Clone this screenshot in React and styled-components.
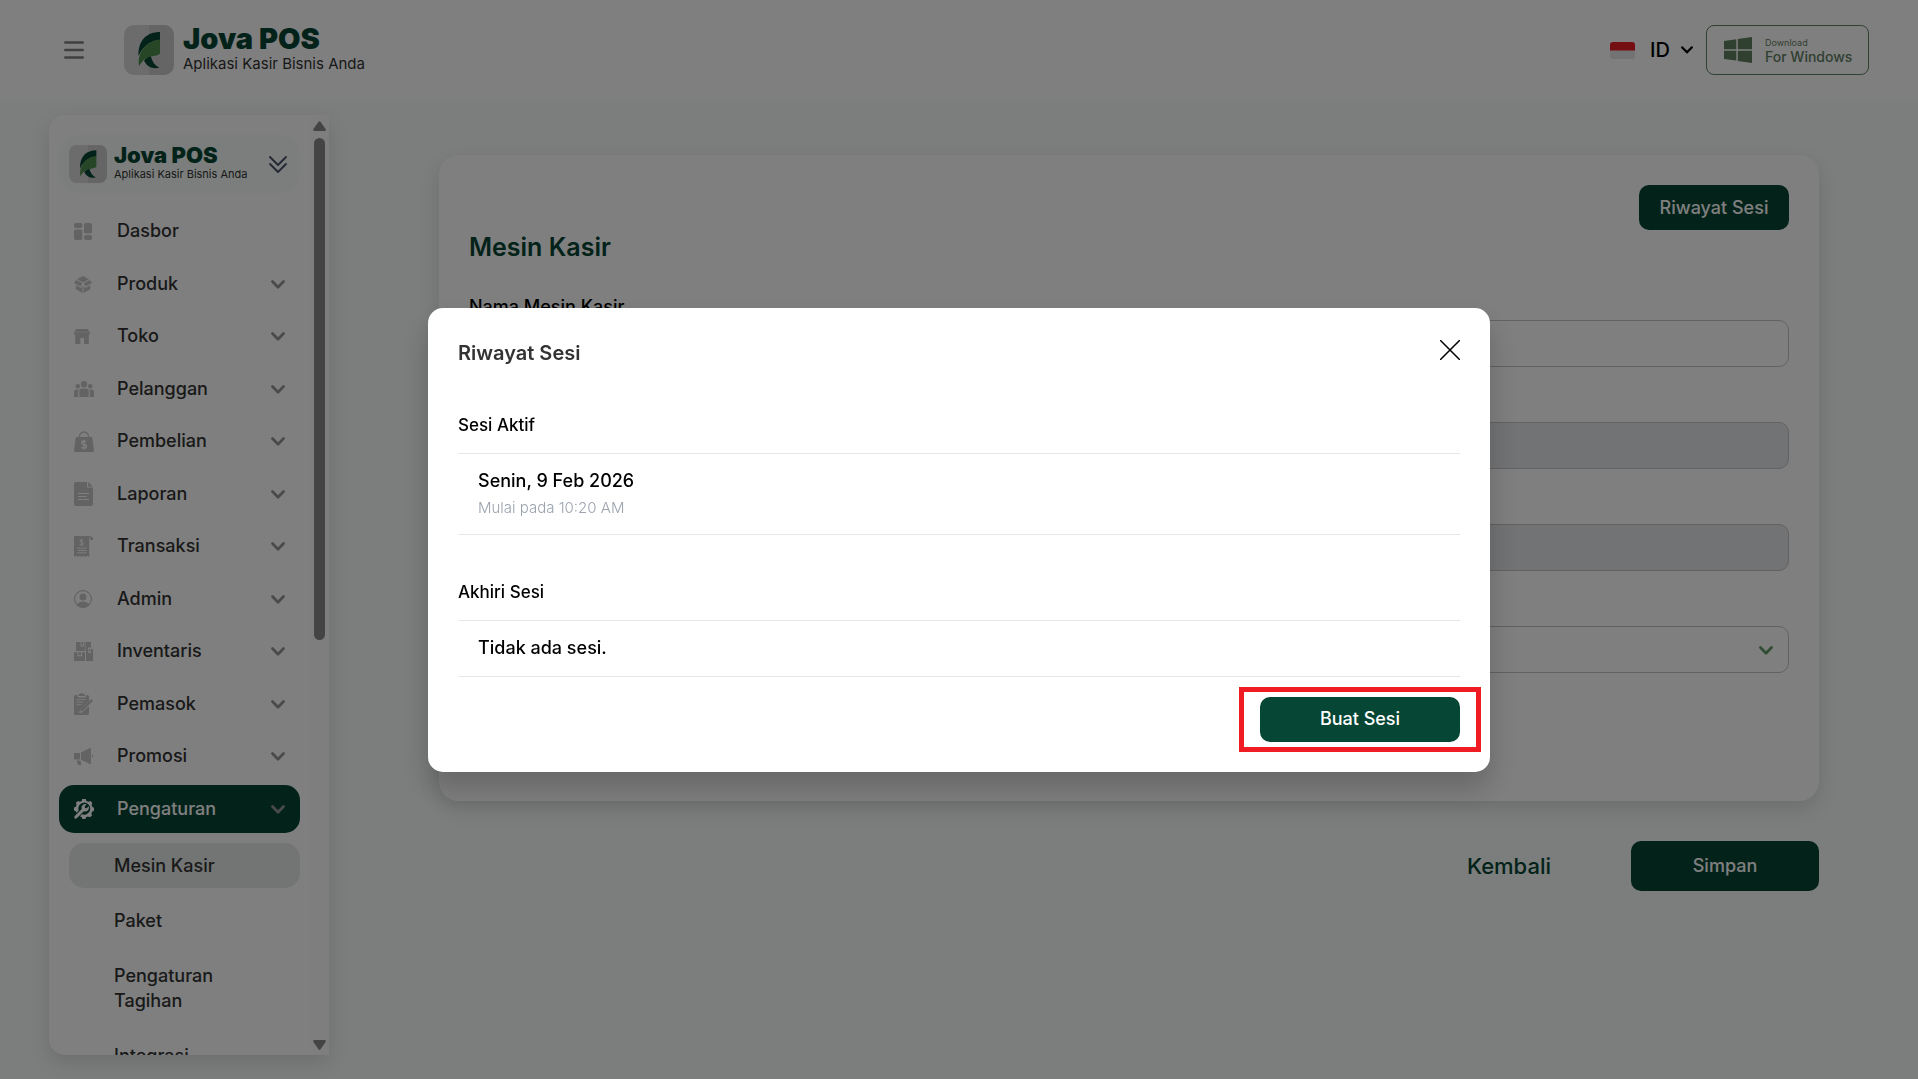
import React from "react";
import styled, { createGlobalStyle, css } from "styled-components";

const GlobalStyle = createGlobalStyle`
  *, *::before, *::after {
    box-sizing: border-box;
  }
  html, body {
    margin: 0;
    padding: 0;
  }
  body {
    background: #f6fcf9;
    color: #333;
    font-family: "Inter", "Open Sans", sans-serif;
    font-size: 18px;
    font-weight: 500;
    line-height: 24px;
    overflow: hidden;
  }
  button, input, select {
    font: inherit;
    color: inherit;
  }
  button {
    border: 0;
    padding: 0;
    background: none;
    cursor: pointer;
  }
  a {
    color: inherit;
    text-decoration: none;
  }
  ul {
    list-style: none;
    margin: 0;
    padding: 0;
  }
  svg {
    display: block;
    flex: none;
  }
`;

const Page = styled.div`
  display: flex;
  flex-direction: column;
  min-height: 100vh;
`;

/* Header */

const Header = styled.header`
  display: flex;
  align-items: center;
  height: 100px;
  padding: 0 49px 0 64px;
  background: #fff;
`;

const MenuToggle = styled.button`
  display: flex;
  margin-right: 40px;
`;

const Brand = styled.a`
  display: flex;
  align-items: center;
  gap: ${(p) => (p.$small ? 7 : 9)}px;
`;

const BrandName = styled.strong`
  display: block;
  color: #064635;
  font-size: ${(p) => (p.$small ? 22 : 29)}px;
  font-weight: 900;
  line-height: ${(p) => (p.$small ? 20 : 28)}px;
`;

const BrandTagline = styled.span`
  display: block;
  font-size: ${(p) => (p.$small ? 11 : 15)}px;
  font-weight: 400;
  line-height: ${(p) => (p.$small ? 18 : 22)}px;
  white-space: nowrap;
`;

const HeaderTools = styled.div`
  display: flex;
  align-items: center;
  margin-left: auto;
`;

const LanguageButton = styled.button`
  display: flex;
  align-items: center;
  margin-right: 13px;
  color: #000;
  font-size: 20px;
`;

const LanguageCode = styled.span`
  margin: 0 11px 0 15px;
`;

const DownloadLink = styled.a`
  display: flex;
  align-items: center;
  gap: 13px;
  width: 163px;
  height: 50px;
  padding-left: 17px;
  border: 1px solid #5f8566;
  border-radius: 8px;
  color: #5f8063;
  font-size: 14px;
  line-height: 14px;
  white-space: nowrap;

  small {
    display: block;
    font-size: 9px;
    font-weight: 400;
  }
`;

/* Sidebar */

const Body = styled.div`
  display: flex;
  flex: 1;
`;

const Sidebar = styled.aside`
  display: flex;
  flex: none;
  width: 280px;
  height: calc(100vh - 139px);
  margin: 15px 0 0 49px;
  overflow: hidden;
  border-radius: 16px 0 0 16px;
  background: #fff;
  box-shadow: 0 8px 20px rgba(0, 0, 0, 0.12);
`;

const SidebarContent = styled.div`
  flex: 1;
  padding: 20px 10px 0;
`;

const BrandCard = styled.div`
  display: flex;
  align-items: center;
  justify-content: space-between;
  height: 58px;
  margin-bottom: 14px;
  padding: 0 13px 0 10px;
  border-radius: 20px;
  background: #f6fcf9;
`;

const MenuItem = styled.li`
  margin-bottom: 4px;

  &:nth-child(odd) {
    margin-bottom: 5px;
  }
`;

const MenuButton = styled.button`
  display: flex;
  align-items: center;
  width: 100%;
  height: 48px;
  padding: 0 15px;
  border-radius: 15px;
  color: #333;
  text-align: left;

  ${(p) =>
    p.$active &&
    css`
      background: #064635;
      color: #fff;
    `}
`;

const MenuIcon = styled.span`
  display: flex;
  align-items: center;
  width: 43px;
  color: ${(p) => (p.$active ? "#fff" : "#c6c6c6")};
`;

const MenuLabel = styled.span`
  flex: 1;
`;

const SubMenu = styled.ul`
  display: flex;
  flex-direction: column;
  gap: 10px;
  padding: 10px 0 0 10px;
`;

const SubLink = styled.a`
  display: block;
  padding: 10px 60px 10px 45px;
  border-radius: 15px;
  background: ${(p) => (p.$active ? "#e5ebe8" : "transparent")};
  line-height: 25px;
`;

const ScrollTrack = styled.div`
  display: flex;
  flex-direction: column;
  align-items: center;
  width: 19px;
  padding: 6px 0 5px;
  background: #fdfdfd;
`;

const ScrollThumb = styled.div`
  width: 11px;
  height: 54%;
  margin: 7px 0 auto;
  border-radius: 6px;
  background: #888;
`;

/* Main form */

const Main = styled.main`
  flex: 1;
  padding: 55px 99px 0 110px;
`;

const Card = styled.section`
  display: flex;
  flex-direction: column;
  padding: 30px 30px 128px;
  border-radius: 20px;
  background: #fff;
  box-shadow: 0 8px 20px rgba(0, 0, 0, 0.12);
`;

const PrimaryButton = styled.button`
  width: ${(p) => p.$width || 150}px;
  height: ${(p) => (p.$tall ? 50 : 45)}px;
  border-radius: 10px;
  background: #064635;
  color: #fff;
`;

const CardTools = styled.div`
  display: flex;
  justify-content: flex-end;
`;

const CardTitle = styled.h1`
  margin: 0 0 30px;
  color: #064635;
  font-size: 25px;
  font-weight: 600;
  line-height: 34px;
`;

const Field = styled.div`
  position: relative;
  display: flex;
  flex-direction: column;

  & + & {
    margin-top: 29px;
  }

  label {
    color: #000;
    line-height: 26px;
  }
`;

const control = css`
  width: 100%;
  height: 47px;
  padding: 0 16px;
  border: 1px solid #c4c4c4;
  border-radius: 10px;
  background: #fff;

  &:disabled {
    background: #e5e7eb;
  }
`;

const Input = styled.input`
  ${control}
`;

const Select = styled.select`
  ${control}
  appearance: none;
`;

const SelectArrow = styled.span`
  position: absolute;
  right: 16px;
  bottom: 18px;
  color: #5f9c66;
  pointer-events: none;
`;

const Actions = styled.div`
  display: flex;
  align-items: center;
  justify-content: flex-end;
  gap: 80px;
  margin-top: 40px;
`;

const BackLink = styled.a`
  color: #064635;
  font-size: 22px;
`;

/* Session dialog */

const Overlay = styled.div`
  position: fixed;
  inset: 0;
  display: flex;
  align-items: center;
  justify-content: center;
  background: rgba(0, 0, 0, 0.5);
`;

const Dialog = styled.div`
  width: 100%;
  max-width: 1062px;
  padding: 30px;
  border-radius: 15px;
  background: #fff;
  box-shadow: 0 16px 30px rgba(0, 0, 0, 0.2);
  color: #000;
`;

const DialogHeader = styled.div`
  display: flex;
  align-items: flex-start;
  justify-content: space-between;
  margin-bottom: 45px;
`;

const DialogTitle = styled.h2`
  margin: 0;
  color: #333;
  font-size: 20px;
  font-weight: 600;
  line-height: 30px;
`;

const CloseButton = styled.button`
  display: flex;
  padding: 2px 0;
`;

const SessionGroup = styled.section`
  & + & {
    margin-top: 45px;
  }

  h3 {
    margin: 0;
    padding-bottom: 16px;
    border-bottom: 1px solid #e5e7eb;
    font-size: 17px;
    font-weight: 500;
  }
`;

const SessionRow = styled.div`
  padding: 15px 20px 16px;
  border-bottom: 1px solid #e5e7eb;

  p {
    margin: 0;
  }
`;

const SessionTime = styled.p`
  padding-top: 5px;
  color: #9ca3af;
  font-size: 15px;
  font-weight: 300;
  line-height: 20px;
`;

const DialogFooter = styled.div`
  display: flex;
  justify-content: flex-end;
  margin-top: 20px;
`;

const Highlight = styled.div`
  position: relative;

  &::after {
    content: "";
    position: absolute;
    inset: -10px -21px;
    border: 5px solid #ef1c24;
    pointer-events: none;
  }
`;

function LogoMark({ size }) {
  return (
    <svg width={size} height={size} viewBox="4 5 50 50" aria-hidden="true">
      <rect x="4" y="5" width="50" height="50" rx="10" fill="#d8d8d8" />
      <path d="M29 5H44a10 10 0 0 1 10 10V45a10 10 0 0 1-10 10H29Z" fill="#cbcbcb" />
      <path d="M40 12C27 12 18 20 18.500 36C24 24 33 20 40 20Z" fill="#064635" />
      <path d="M40 19.500C29 21 17 29 19 46C21 43 22.500 41 25 39C30 35.500 37 36.500 40 33.500Z" fill="#4d8c4b" />
      <path d="M31 36.500C32 41 35 46 39.500 47.500C33 49.500 27 47 24 40.500C26 38 28 37 31 36.500Z" fill="#064635" />
    </svg>
  );
}

function Chevron({ width = 14, color = "#949494", stroke = 2.7 }) {
  return (
    <svg width={width} height={Math.round(width * 0.64)} viewBox="0 0 14 9" fill="none" stroke={color} strokeWidth={stroke} strokeLinecap="round" strokeLinejoin="round" aria-hidden="true">
      <path d="M1.500 1.500 7 7.200 12.500 1.500" />
    </svg>
  );
}

// every icon is drawn on its own pixel grid: [width, height, shapes]
const icons = {
  dashboard: [18, 17, <>
    <rect width="8.400" height="5" rx="1.800" />
    <rect y="6.500" width="8.400" height="10.500" rx="1.800" />
    <rect x="10" width="8" height="10.500" rx="1.800" />
    <rect x="10" y="12" width="8" height="5" rx="1.800" />
  </>],
  product: [18, 17, <>
    <path d="M9 0 15 3.200 9 6.400 3 3.200Z" />
    <path d="M2.200 4 8.400 7.300 6.400 10.400 0 6.900Z" />
    <path d="M15.800 4 9.600 7.300 11.600 10.400 18 6.900Z" />
    <path d="M1.800 9.200 6.800 11.900 8.500 9.500V17L1.800 13.300Z" />
    <path d="M16.200 9.200 11.200 11.900 9.500 9.500V17L16.200 13.300Z" />
  </>],
  store: [16, 15, <>
    <path d="M2 0H14L16 4V5.500H0V4Z" />
    <path d="M1.200 5H14.800V15H10V9H6.400V15H1.200Z" />
    <path d="M1 3.200H15" stroke="#fff" strokeWidth=".4" />
  </>],
  customers: [20, 16, <>
    <circle cx="10" cy="3.200" r="3.200" />
    <circle cx="3.800" cy="5.200" r="2.300" />
    <circle cx="16.200" cy="5.200" r="2.300" />
    <path d="M5.300 16V10.600Q5.300 7.400 8.200 7.400H11.800Q14.700 7.400 14.700 10.600V16Z" />
    <path d="M0 16V11Q0 8.600 2.400 8.600H4.700Q4.200 9.600 4.200 11V16Z" />
    <path d="M20 16V11Q20 8.600 17.600 8.600H15.300Q15.800 9.600 15.800 11V16Z" />
  </>],
  purchase: [20, 21, <>
    <path d="M5.500 8V5.500A4.500 4.500 0 0 1 14.500 5.500V8" fill="none" stroke="currentColor" strokeWidth="1.300" />
    <path d="M1.800 6H18.200L20 19.500Q20 21 18.500 21H1.500Q0 21 0 19.500Z" />
    <path d="M12.300 11.200Q11.600 10 10 10Q7.700 10 7.700 11.700Q7.700 13.200 10 13.500Q12.400 13.800 12.400 15.400Q12.400 17.200 10 17.200Q8.200 17.200 7.600 15.900M10 8.800V18.400" fill="none" stroke="#fff" strokeWidth="1.300" />
  </>],
  report: [19, 24, <>
    <path d="M2 0H13V5.500H19V22Q19 24 17 24H2Q0 24 0 22V2Q0 0 2 0Z" />
    <path d="M14.200 0 18.800 4.500H14.200Z" />
    <path d="M4 11.500H15M4 14.500H12.500M4 17.500H15" stroke="#fff" strokeWidth="1" />
  </>],
  transaction: [19, 21, <>
    <path d="M0 0H17Q15.200 .8 15.200 3V21L13.300 19.800 11.400 21 9.500 19.800 7.600 21 5.700 19.800 3.800 21 1.900 19.800 0 21Z" />
    <path d="M16.200 4V2.300Q16.200 .6 17.600 .6Q19 .6 19 2.300V4Z" />
    <path d="M9.300 4.700Q8.800 3.900 7.600 3.900Q5.900 3.900 5.900 5.100Q5.900 6.200 7.600 6.400Q9.400 6.600 9.400 7.900Q9.400 9.100 7.600 9.100Q6.200 9.100 5.700 8.100M7.600 2.800V10.200M2.800 12.200H12.600M4 14.500H12.600M2.800 16.800H12.600" fill="none" stroke="#fff" strokeWidth=".9" />
  </>],
  admin: [18, 18, <>
    <circle cx="9" cy="9" r="8.400" fill="none" stroke="currentColor" strokeWidth="1.200" />
    <circle cx="9" cy="7" r="3.500" />
    <path d="M2.600 14.200Q5 11.500 9 11.500T15.400 14.200Q13 17.600 9 17.600T2.600 14.200Z" />
  </>],
  inventory: [19, 19, <>
    <path d="M2 0H6.500V4.500H10V0H10.800V9H2ZM7.500 0H9V3.500H7.500ZM11.500 0H17V5.500H14V9H11.500Z" />
    <path d="M0 10.300H3.500V14.200H8V10.300H11V19H0ZM4.500 10.300H7V13.200H4.500ZM12 7H14V11H17V7H19V19H12ZM14.800 7H16.200V10H14.800Z" />
  </>],
  supplier: [19, 22, <>
    <path d="M1.500 2H3Q3.500 4.500 5 4.500H10.500Q12 4.500 12.500 2H13.500Q15 2 15 3.500V8L6 17 5 20 8 19.500 15 13V20.500Q15 22 13.500 22H1.500Q0 22 0 20.500V3.500Q0 2 1.500 2Z" />
    <path d="M4.500 1H6.200Q7.700-.8 9.200 1H11V3H4.500Z" />
    <path d="M17.200 6 19 7.800 8.700 18.100 6.300 18.700 6.900 16.300Z" />
    <path d="M2.500 6.700H11.500M2.500 9.200H9.500M2.500 11.700H7.500" stroke="#fff" strokeWidth=".9" />
  </>],
  promo: [19, 17, <>
    <path d="M0 5H6V11.500H0Z" />
    <path d="M7 4.500 16 0H17V16H16L7 11.800Z" />
    <path d="M18 6.300Q19 7 19 8T18 9.700Z" />
    <path d="M2.800 12.500H6.500L7.500 17H5Q3.800 17 3.500 16Z" />
  </>],
  settings: [20, 20, <>
    <path d="M8.300 0H11.700L12.400 2 14.500 2.800 16.500 2 18.300 3.900 17.600 6 18.400 7.900 20 8.700V11.700L18.300 12.600 17.400 14.500 18 16.500 16 18.300 13.900 17.500 12 18.300 11.400 20H8.400L7.600 18.100 6 17.300 8 15.200A6 6 0 1 0 4.600 11.700L2.500 13.700 1.900 12.300 0 11.500V8.500L1.800 7.700 2.600 5.800 1.900 3.800 4 2 6 2.700 7.700 2Z" />
    <path d="M12.700 5.300 10.700 7.300 11 9 12.700 9.300 14.700 7.300Q15.500 9.800 13.800 11.500 12.200 13 9.900 12.300L3 19Q1.700 20.200.7 19.200T1 16.800L7.800 10.100Q7 7.800 8.500 6.200 10.200 4.500 12.700 5.300Z" />
  </>]
};

function Icon({ name }) {
  const [width, height, shapes] = icons[name];
  return (
    <svg width={width} height={height} viewBox={`0 0 ${width} ${height}`} fill="currentColor" fillRule="evenodd" aria-hidden="true">
      {shapes}
    </svg>
  );
}

const menu = [
  { label: "Dasbor", icon: "dashboard", single: true },
  { label: "Produk", icon: "product" },
  { label: "Toko", icon: "store" },
  { label: "Pelanggan", icon: "customers" },
  { label: "Pembelian", icon: "purchase" },
  { label: "Laporan", icon: "report" },
  { label: "Transaksi", icon: "transaction" },
  { label: "Admin", icon: "admin" },
  { label: "Inventaris", icon: "inventory" },
  { label: "Pemasok", icon: "supplier" },
  { label: "Promosi", icon: "promo" },
  {
    label: "Pengaturan",
    icon: "settings",
    active: true,
    children: ["Mesin Kasir", "Paket", "Pengaturan Tagihan", "Integrasi"]
  }
];

function Logo({ small }) {
  return (
    <Brand href="#" $small={small}>
      <LogoMark size={small ? 38 : 50} />
      <span>
        <BrandName $small={small}>Jova POS</BrandName>
        <BrandTagline $small={small}>Aplikasi Kasir Bisnis Anda</BrandTagline>
      </span>
    </Brand>
  );
}

function TopBar() {
  return (
    <Header>
      <MenuToggle type="button" aria-label="Menu">
        <svg width="20" height="18" viewBox="0 0 20 18" stroke="#808080" strokeWidth="2.400" strokeLinecap="round">
          <path d="M1.200 1.500H18.800M1.200 9H18.800M1.200 16.500H18.800" />
        </svg>
      </MenuToggle>
      <Logo />
      <HeaderTools>
        <LanguageButton type="button">
          <svg width="25" height="17" viewBox="0 0 25 17" aria-hidden="true">
            <rect width="25" height="17" rx="3" fill="#e6e6e6" />
            <path d="M0 8.500V3A3 3 0 0 1 3 0H22A3 3 0 0 1 25 3V8.500Z" fill="#ea1c24" />
          </svg>
          <LanguageCode>ID</LanguageCode>
          <Chevron width={12} color="#000" />
        </LanguageButton>
        <DownloadLink href="#">
          <svg width="28" height="26" viewBox="0 0 28 26" fill="currentColor" aria-hidden="true">
            <path d="M0 4 12.300 2.300V12.200H0ZM13.800 2 28 0V12.200H13.800ZM0 13.700H12.300V23.600L0 22ZM13.800 13.700H28V26L13.800 23.900Z" />
          </svg>
          <span>
            <small>Download</small>
            For Windows
          </span>
        </DownloadLink>
      </HeaderTools>
    </Header>
  );
}

function SideNav() {
  return (
    <Sidebar>
      <SidebarContent>
        <BrandCard>
          <Logo small />
          <svg width="18" height="17" viewBox="0 0 18 17" fill="none" stroke="#4a4d66" strokeWidth="1.800" strokeLinecap="round" strokeLinejoin="round" aria-hidden="true">
            <path d="M1 1 9 9 17 1M1 8 9 16 17 8" />
          </svg>
        </BrandCard>
        <ul>
          {menu.map((item) => (
            <MenuItem key={item.label}>
              <MenuButton type="button" $active={item.active}>
                <MenuIcon $active={item.active}><Icon name={item.icon} /></MenuIcon>
                <MenuLabel>{item.label}</MenuLabel>
                {!item.single && <Chevron />}
              </MenuButton>
              {item.children && (
                <SubMenu>
                  {item.children.map((child, i) => (
                    <li key={child}><SubLink href="#" $active={i === 0}>{child}</SubLink></li>
                  ))}
                </SubMenu>
              )}
            </MenuItem>
          ))}
        </ul>
      </SidebarContent>
      <ScrollTrack>
        <svg width="13" height="10" viewBox="0 0 13 10" fill="#888"><path d="M5.500.8Q6.500-.4 7.500.8L12.600 8Q13.300 10 11.500 10H1.500Q-.3 10 .4 8Z" /></svg>
        <ScrollThumb />
        <svg width="13" height="10" viewBox="0 0 13 10" fill="#888"><path d="M5.500 9.200Q6.500 10.400 7.500 9.200L12.600 2Q13.300 0 11.500 0H1.500Q-.3 0 .4 2Z" /></svg>
      </ScrollTrack>
    </Sidebar>
  );
}

function RegisterForm() {
  return (
    <Main>
      <Card>
        <CardTools>
          <PrimaryButton type="button">Riwayat Sesi</PrimaryButton>
        </CardTools>
        <CardTitle>Mesin Kasir</CardTitle>
        <Field>
          <label htmlFor="name">Nama Mesin Kasir</label>
          <Input id="name" />
        </Field>
        <Field>
          <label htmlFor="code">Kode</label>
          <Input id="code" disabled />
        </Field>
        <Field>
          <label htmlFor="store">Toko</label>
          <Input id="store" disabled />
        </Field>
        <Field>
          <label htmlFor="status">Status</label>
          <Select id="status" />
          <SelectArrow><Chevron color="currentColor" /></SelectArrow>
        </Field>
      </Card>
      <Actions>
        <BackLink href="#">Kembali</BackLink>
        <PrimaryButton type="submit" $width={188} $tall>Simpan</PrimaryButton>
      </Actions>
    </Main>
  );
}

function SessionDialog() {
  return (
    <Overlay>
      <Dialog role="dialog" aria-modal="true" aria-labelledby="session-title">
        <DialogHeader>
          <DialogTitle id="session-title">Riwayat Sesi</DialogTitle>
          <CloseButton type="button" aria-label="Tutup">
            <svg width="20" height="20" viewBox="0 0 20 20" stroke="#000" strokeWidth="1.500">
              <path d="M0 0 20 20M20 0 0 20" />
            </svg>
          </CloseButton>
        </DialogHeader>
        <SessionGroup>
          <h3>Sesi Aktif</h3>
          <SessionRow>
            <p>Senin, 9 Feb 2026</p>
            <SessionTime>Mulai pada 10:20 AM</SessionTime>
          </SessionRow>
        </SessionGroup>
        <SessionGroup>
          <h3>Akhiri Sesi</h3>
          <SessionRow>
            <p>Tidak ada sesi.</p>
          </SessionRow>
        </SessionGroup>
        <DialogFooter>
          <Highlight>
            <PrimaryButton type="button" $width={200}>Buat Sesi</PrimaryButton>
          </Highlight>
        </DialogFooter>
      </Dialog>
    </Overlay>
  );
}

export default function App() {
  return (
    <Page>
      <GlobalStyle />
      <TopBar />
      <Body>
        <SideNav />
        <RegisterForm />
      </Body>
      <SessionDialog />
    </Page>
  );
}
